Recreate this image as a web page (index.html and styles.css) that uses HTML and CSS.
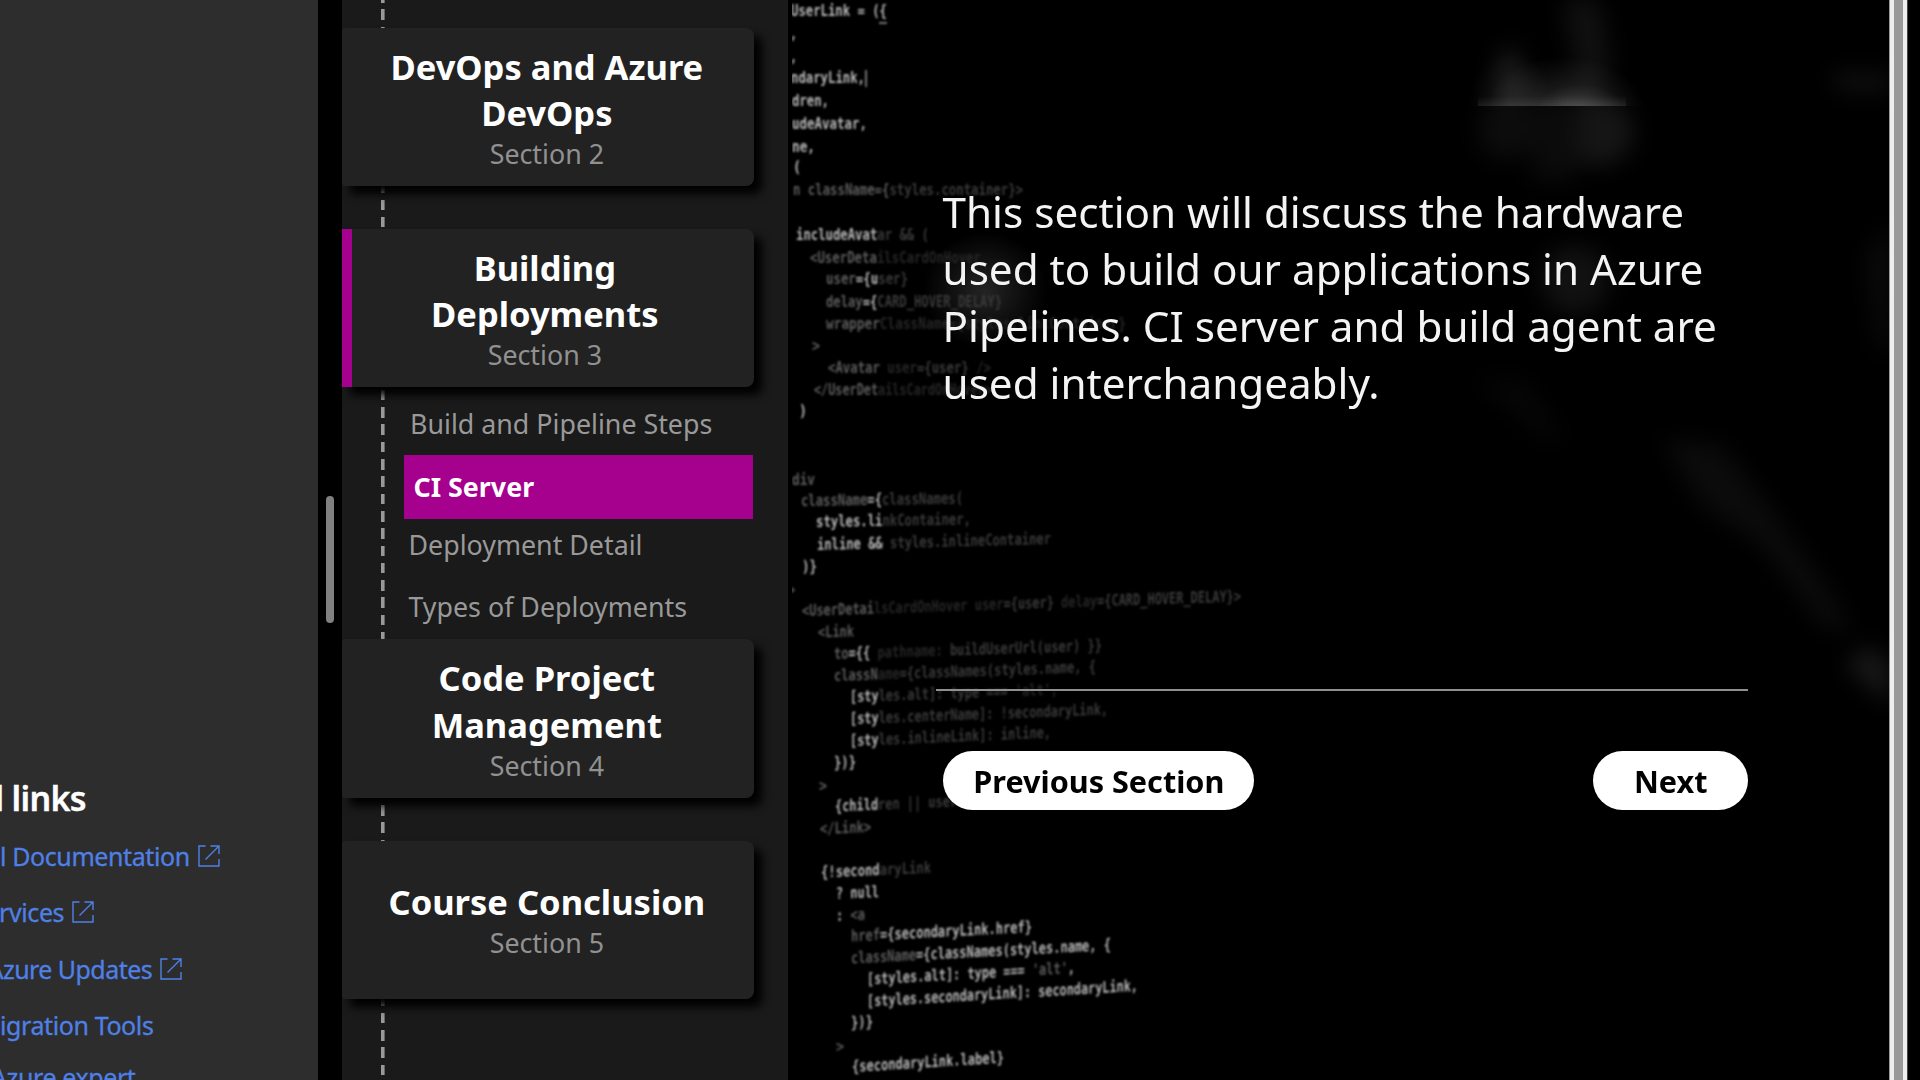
FILE: index.html
```html
<!DOCTYPE html>
<html lang="en">
<head>
<meta charset="utf-8">
<title>CI Server</title>
<link rel="stylesheet" href="styles.css">
</head>
<body>
<svg class="defs" width="0" height="0">
  <symbol id="external" viewBox="0 0 22 22"><path d="M7.5 1H1v20h20v-7M12.5 1H21v8M21 1 7.5 14.5" fill="none" stroke="currentColor" stroke-width="1.4"/></symbol>
</svg>
<div class="app">
  <aside class="links">
    <h2>l links</h2>
    <ul>
      <li class="l1"><a>l Documentation</a><svg><use href="#external"/></svg></li>
      <li class="l2"><a>rvices</a><svg><use href="#external"/></svg></li>
      <li class="l3"><a>Azure Updates</a><svg><use href="#external"/></svg></li>
      <li class="l4"><a>igration Tools</a></li>
      <li class="l5"><a>Azure expert</a></li>
    </ul>
  </aside>
  <div class="splitter"><span class="grip"></span></div>
  <nav class="course">
    <section class="card"><h3>DevOps and Azure DevOps</h3><p>Section 2</p></section>
    <section class="card current"><h3>Building Deployments</h3><p>Section 3</p></section>
    <ul class="steps">
      <li class="step first">Build and Pipeline Steps</li>
      <li class="step active">CI Server</li>
      <li class="step">Deployment Detail</li>
      <li class="step last">Types of Deployments</li>
    </ul>
    <section class="card"><h3>Code Project Management</h3><p>Section 4</p></section>
    <section class="card"><h3>Course Conclusion</h3><p>Section 5</p></section>
  </nav>
  <main class="lesson">
    <svg class="backdrop" viewBox="788 0 1101 1080" width="1101" height="1080">
      <defs>
        <filter id="soft" filterUnits="userSpaceOnUse" x="1300" y="-100" width="700" height="900" color-interpolation-filters="sRGB"><feGaussianBlur stdDeviation="11"/></filter>
        <filter id="focus" filterUnits="userSpaceOnUse" x="788" y="0" width="500" height="1080" color-interpolation-filters="sRGB"><feGaussianBlur stdDeviation=".85"/></filter>
        <linearGradient id="glow" x1="0" y1="0" x2="0" y2="1"><stop offset="0" stop-color="#fff" stop-opacity="0"/><stop offset="1" stop-color="#fff" stop-opacity=".08"/></linearGradient>
        <radialGradient id="lamp"><stop offset="0" stop-color="#fff" stop-opacity=".14"/><stop offset="1" stop-color="#fff" stop-opacity="0"/></radialGradient>
        <clipPath id="page"><rect x="792.5" y="0" width="1097" height="1080"/></clipPath>
        <clipPath id="horizon"><rect x="1460" y="0" width="185" height="106"/></clipPath>
      </defs>
      <g class="haze" filter="url(#soft)">
        <path d="M1562 0h38l12 70-30 30z" fill="#101010"/>
        <ellipse cx="1510" cy="78" rx="15" ry="32" fill="#131313"/>
        <ellipse cx="1506" cy="130" rx="28" ry="30" fill="#0c0c0c"/>
        <ellipse cx="1598" cy="132" rx="36" ry="34" fill="#151515"/>
        <path d="M1530 100h50l-6 80h-40z" fill="#0b0b0b"/>
        <circle cx="1575" cy="280" r="34" fill="#111"/>
        <path d="M1475 380l50 0 40 60-20 0z" fill="#060606"/>
        <path d="M1662 440l60 5 60 80 50 70 20 40-30-10-60-80-60-40z" fill="#0b0b0b"/>
        <path d="M1845 665l25-20 20 20v40z" fill="#181818"/>
        <path d="M1830 73h60v18h-50z" fill="#101010"/>
        <path d="M1889 220v130h-10l-12-90z" fill="#0c0c0c"/>
      </g>
      <ellipse cx="985" cy="290" rx="62" ry="58" fill="url(#lamp)"/>
      <g clip-path="url(#horizon)">
        <ellipse cx="1565" cy="106" rx="78" ry="50" fill="url(#lamp)"/>
        <path d="M1478 106v-10h148v10z" fill="url(#glow)"/>
        <ellipse cx="1580" cy="106" rx="42" ry="22" fill="url(#lamp)" opacity=".7"/>
        <ellipse cx="1510" cy="106" rx="42" ry="56" fill="url(#lamp)" opacity=".5"/>
      </g>
      <g class="code" clip-path="url(#page)"><g filter="url(#focus)">
        <text transform="translate(791 16)" textLength="96">UserLink = ({</text>
        <path d="M879 23h8M866 70v17" stroke="#999" stroke-width="1.5"/>
        <text x="790" y="39" textLength="7">,</text>
        <text x="790" y="62" textLength="7">,</text>
        <text x="791" y="83" textLength="74">ndaryLink,</text>
        <text x="792" y="106" textLength="37">dren,</text>
        <text x="792" y="129" textLength="75">udeAvatar,</text>
        <text x="792" y="152" textLength="23">ne,</text>
        <text x="793" y="172" textLength="8">(</text>
        <text x="793" y="195" textLength="230"><tspan class="m">n className</tspan><tspan class="m">={</tspan><tspan class="d">styles.container}&gt;</tspan></text>
        <text x="796" y="240" textLength="133">includeAvat<tspan class="d">ar &amp;&amp; (</tspan></text>
        <text x="810" y="263" textLength="171"><tspan class="m">&lt;UserDeta</tspan><tspan class="x">ilsCardOnHover</tspan></text>
        <text x="826" y="284" textLength="82"><tspan class="m">user</tspan>={u<tspan class="d">ser}</tspan></text>
        <text x="826" y="307" textLength="176"><tspan class="m">delay</tspan>={<tspan class="d">CARD_HOVER_DELAY}</tspan></text>
        <text x="826" y="329" textLength="300"><tspan class="m">wrapper</tspan><tspan class="x">ClassName={styles.linkContainer}</tspan></text>
        <text x="812" y="351" textLength="8"><tspan class="m">&gt;</tspan></text>
        <text x="828" y="373" textLength="163"><tspan class="m">&lt;Avatar </tspan><tspan class="x">user</tspan><tspan class="d">={user}</tspan><tspan class="x"> /&gt;</tspan></text>
        <text x="814" y="395" textLength="178"><tspan class="m">&lt;/UserDet</tspan><tspan class="x">ailsCardOnHover&gt;</tspan></text>
        <text x="799" y="416" textLength="8">)</text>

        <text transform="translate(792 485) skewY(-.6)" textLength="23"><tspan class="m">div</tspan></text>
        <text transform="translate(801 506) skewY(-.9)" textLength="162"><tspan class="m">className</tspan>={<tspan class="d">classNames(</tspan></text>
        <text transform="translate(816 527) skewY(-1)" textLength="155">styles.li<tspan class="d">nkContainer,</tspan></text>
        <text transform="translate(817 550) skewY(-1.5)" textLength="234">inline &amp;&amp;<tspan class="d"> styles.inlineContainer</tspan></text>
        <text transform="translate(802 572) skewY(-1)" textLength="15">)}</text>
        <text transform="translate(788 595)" textLength="7"><tspan class="m">&gt;</tspan></text>
        <text transform="translate(802 616) skewY(-1.9)" textLength="439"><tspan class="m">&lt;UserDetai</tspan><tspan class="x">lsCardOnHover user</tspan><tspan class="d">={user} </tspan><tspan class="x">delay</tspan><tspan class="d">={CARD_HOVER_DELAY}&gt;</tspan></text>
        <text transform="translate(818 637.5) skewY(-1.5)" textLength="36"><tspan class="m">&lt;Link</tspan></text>
        <text transform="translate(834 659) skewY(-1.8)" textLength="268"><tspan class="m">to</tspan>={{ <tspan class="x">pathname: </tspan><tspan class="d">buildUserUrl(user) }}</tspan></text>
        <text transform="translate(834 681) skewY(-2)" textLength="262"><tspan class="m">classN</tspan><tspan class="x">ame</tspan><tspan class="d">={classNames(styles.name, {</tspan></text>
        <text transform="translate(850 702) skewY(-2)" textLength="208">[sty<tspan class="d">les.alt]: type === </tspan><tspan class="x">'alt',</tspan></text>
        <text transform="translate(850 724) skewY(-2.1)" textLength="258">[sty<tspan class="d">les.centerName]: !secondaryLink,</tspan></text>
        <text transform="translate(850 746) skewY(-2.4)" textLength="201">[sty<tspan class="d">les.inlineLink]: inline,</tspan></text>
        <text transform="translate(834 768) skewY(-2)" textLength="22">})}</text>
        <text transform="translate(819 791)" textLength="8"><tspan class="m">&gt;</tspan></text>
        <text transform="translate(835 811.5) skewY(-2.4)" textLength="158">{child<tspan class="d">ren || username}</tspan></text>
        <text transform="translate(820 834) skewY(-2)" textLength="51"><tspan class="m">&lt;/Link&gt;</tspan></text>
        <text transform="translate(821 877.5) skewY(-2.4)" textLength="110">{!second<tspan class="d">aryLink</tspan></text>
        <text transform="translate(836 899) skewY(-2.5)" textLength="43">? null</text>
        <text transform="translate(836 921) skewY(-2.5)" textLength="29">: <tspan class="m">&lt;a</tspan></text>
        <text transform="translate(851 941.5) skewY(-3)" textLength="181"><tspan class="m">href</tspan>={secondaryLink.href}</text>
        <text transform="translate(851 963.5) skewY(-3)" textLength="260"><tspan class="m">className</tspan>={classNames(styles.name, {</text>
        <text transform="translate(867 984.5) skewY(-3.2)" textLength="208">[styles.alt]: type === <tspan class="m">'alt'</tspan>,</text>
        <text transform="translate(867 1006.5) skewY(-3.3)" textLength="271">[styles.secondaryLink]: secondaryLink,</text>
        <text transform="translate(851 1028) skewY(-3)" textLength="22">})}</text>
        <text transform="translate(836 1052) skewY(-3)" textLength="8"><tspan class="m">&gt;</tspan></text>
        <text transform="translate(852 1072) skewY(-3.5)" textLength="152">{secondaryLink.label}</text>
      </g></g>
    </svg>
    <div class="content">
      <p class="copy">This section will discuss the hardware used to build our applications in Azure Pipelines. CI server and build agent are used interchangeably.</p>
      <hr>
      <div class="actions"><button class="prev">Previous Section</button><button class="next">Next</button></div>
    </div>
  </main>
  <div class="scrollbar"></div>
</div>
<script>
  // Condense the glyphs of every code line to its set length.
  document.querySelectorAll('.code text').forEach(t => t.setAttribute('lengthAdjust', 'spacingAndGlyphs'));
</script>
</body>
</html>
```
FILE: styles.css
```css
* { box-sizing: border-box; }
html, body { margin: 0; height: 100%; overflow: hidden; background: #000; }
body { font-family: "Noto Sans", sans-serif; }
h2, h3, p, ul { margin: 0; padding: 0; list-style: none; }
.defs { position: absolute; }
.app { display: flex; height: 1080px; width: 1920px; }

.links { width: 318px; background: #2d2d2d; padding-top: 768px; overflow: hidden; white-space: nowrap; }
.links h2 { color: #fff; font-size: 34px; font-weight: 600; line-height: 60px; letter-spacing: -.7px; margin-left: -5.5px; -webkit-text-stroke: .4px #fff; }
.links li { display: flex; align-items: center; height: 56.3px; color: #4f80e6; font-size: 25px; line-height: 56.3px; letter-spacing: -.4px; -webkit-text-stroke: .3px #4f80e6; }
.links svg { width: 22px; height: 22px; margin-left: 8px; }
.l2 { margin-left: -1px; }
.links .l3 { margin-left: -12.5px; letter-spacing: -.55px; }
.links .l5 { margin: -4px 0 0 -9px; }

.splitter { width: 24px; background: #000; display: flex; justify-content: center; padding-top: 495.5px; }
.grip { width: 8px; height: 127.5px; border-radius: 4px; background: #808080; }

.course {
  width: 446px; padding-top: 28px; overflow: hidden;
  background: repeating-linear-gradient(to bottom, #999 0 10.6px, transparent 10.6px 17.3px) 39px -8px / 3.6px 1100px no-repeat, #1a1a1a;
}
.card {
  width: 411.7px; height: 158.3px; margin-bottom: 42.8px; padding: 1px 37px 0 35px;
  display: flex; flex-direction: column; justify-content: center; text-align: center;
  background: #222; border-radius: 3px 8px 8px 3px; box-shadow: 8px 8px 10px #000;
}
.card h3 { color: #fff; font-size: 34.5px; line-height: 46.8px; font-weight: 700; }
.card p { color: #919191; font-size: 26.8px; line-height: 34.6px; }
.card.current { margin-bottom: 0; border-left: 10px solid #a6008f; padding: 1px 51px 0 35px; border-radius: 0 8px 8px 0; }
.steps { padding-left: 62px; color: #999; font-size: 26.8px; }
.step { height: 50.4px; line-height: 51.4px; padding-left: 4.5px; margin-bottom: 3px; }
.step.first { margin: 10.4px 0 7.2px; padding-left: 6px; }
.step.active { width: 349px; height: 63.3px; line-height: 63.3px; margin: 0; padding-left: 9.5px; background: #a6008f; color: #fff; font-weight: 700; }
.step.last { height: 67.4px; line-height: 69px; margin: 0; }

.lesson { width: 1101px; position: relative; background: #000; overflow: hidden; }
.backdrop { position: absolute; left: 0; top: 0; }
.code text { font-family: "DejaVu Sans Mono", monospace; font-size: 16px; font-weight: 700; fill: #b8b8b8; white-space: pre; }
.code .m { fill: #5c5c5c; }
.code .d { fill: #3a3a3a; }
.code .x { fill: #262626; }
.content { position: relative; padding: 182.8px 141px 0 154.6px; }
.copy { color: #f4f4f4; font-size: 42.2px; line-height: 57.1px; height: 505.9px; }
hr { border: 0; margin: 0 0 0 -6.6px; height: 2.6px; background: #8f8f8f; }
.actions { display: flex; justify-content: space-between; margin-top: 60px; }
button { border: 0; padding: 1px 0 0 1px; height: 59px; border-radius: 30px; background: #fff; color: #000; font: 700 30.6px "Noto Sans", sans-serif; }
.prev { width: 311.5px; }
.next { width: 155.5px; }
.scrollbar { width: 18.5px; background: linear-gradient(to right, #999 0 1px, #eee 1px 5px, #999 5px 14px, #eee 14px 18px, #444 18px); }
```
